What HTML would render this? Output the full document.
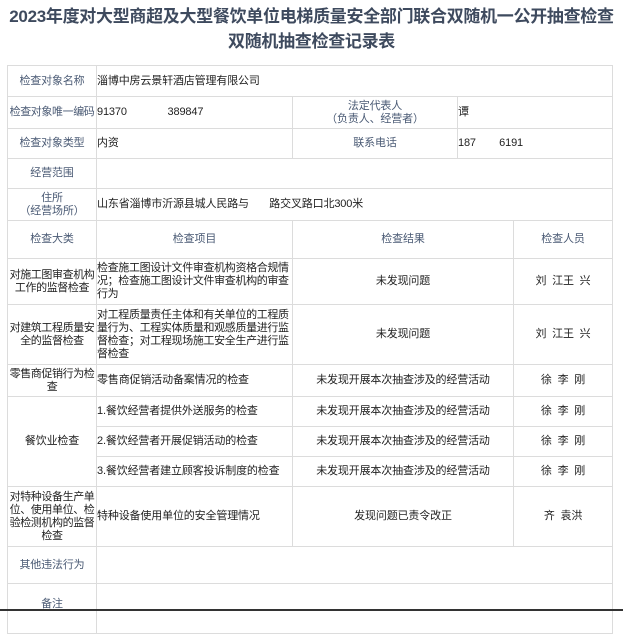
<!DOCTYPE html>
<html><head><meta charset="utf-8"><style>
body{margin:0;width:623px;height:611px;overflow:hidden;background:#fff;font-family:"Liberation Sans","Noto Sans CJK SC",sans-serif;}
h1{margin:0;position:absolute;left:0;width:623px;top:4px;text-align:center;font-size:17px;line-height:25px;color:#3e4a5e;font-weight:bold;letter-spacing:-0.3px}
table{position:absolute;left:7px;top:65px;border-collapse:collapse;table-layout:fixed;width:605px;font-size:11px;color:#222;letter-spacing:-0.15px}
td{border:1px solid #dcdcdc;padding:0;line-height:13px;vertical-align:middle;overflow:hidden}
.h{color:#4a5a74;text-align:center}
.c{text-align:center}
.t{letter-spacing:-0.35px}
</style></head><body>
<h1>2023年度对大型商超及大型餐饮单位电梯质量安全部门联合双随机一公开抽查检查<br>双随机抽查检查记录表</h1>
<table>
<colgroup><col style="width:89px"><col style="width:196px"><col style="width:165px"><col style="width:56px"><col style="width:99px"></colgroup>
<tr style="height:31px"><td class="h">检查对象名称</td><td colspan="4">淄博中房云景轩酒店管理有限公司</td></tr>
<tr style="height:32px"><td class="h" style="white-space:nowrap;letter-spacing:-0.4px">检查对象唯一编码</td><td>91370&nbsp;&nbsp;&nbsp;&nbsp;&nbsp;&nbsp;&nbsp;&nbsp;&nbsp;&nbsp;&nbsp;&nbsp;&nbsp;&nbsp;389847</td><td class="h">法定代表人<br>（负责人、经营者）</td><td colspan="2">谭</td></tr>
<tr style="height:30px"><td class="h">检查对象类型</td><td>内资</td><td class="h">联系电话</td><td colspan="2">187&nbsp;&nbsp;&nbsp;&nbsp;&nbsp;&nbsp;&nbsp;&nbsp;6191</td></tr>
<tr style="height:30px"><td class="h">经营范围</td><td colspan="4"></td></tr>
<tr style="height:32px"><td class="h">住所<br>（经营场所）</td><td colspan="4">山东省淄博市沂源县城人民路与&nbsp;&nbsp;&nbsp;&nbsp;&nbsp;&nbsp;&nbsp;路交叉路口北300米</td></tr>
<tr style="height:38px"><td class="h">检查大类</td><td class="h">检查项目</td><td class="h" colspan="2">检查结果</td><td class="h">检查人员</td></tr>
<tr style="height:46px"><td class="c" style="white-space:nowrap;letter-spacing:-0.4px">对施工图审查机构<br>工作的监督检查</td><td class="t">检查施工图设计文件审查机构资格合规情况；检查施工图设计文件审查机构的审查行为</td><td class="c" colspan="2">未发现问题</td><td class="c">刘&nbsp;&nbsp;江王&nbsp;&nbsp;兴</td></tr>
<tr style="height:60px"><td class="c" style="white-space:nowrap;letter-spacing:-0.4px">对建筑工程质量安<br>全的监督检查</td><td class="t">对工程质量责任主体和有关单位的工程质量行为、工程实体质量和观感质量进行监督检查；对工程现场施工安全生产进行监督检查</td><td class="c" colspan="2">未发现问题</td><td class="c">刘&nbsp;&nbsp;江王&nbsp;&nbsp;兴</td></tr>
<tr style="height:32px"><td class="c" style="white-space:nowrap;letter-spacing:-0.4px">零售商促销行为检<br>查</td><td>零售商促销活动备案情况的检查</td><td class="c" colspan="2">未发现开展本次抽查涉及的经营活动</td><td class="c">徐&nbsp;&nbsp;李&nbsp;&nbsp;刚</td></tr>
<tr style="height:30px"><td class="c" rowspan="3">餐饮业检查</td><td>1.餐饮经营者提供外送服务的检查</td><td class="c" colspan="2">未发现开展本次抽查涉及的经营活动</td><td class="c">徐&nbsp;&nbsp;李&nbsp;&nbsp;刚</td></tr>
<tr style="height:30px"><td>2.餐饮经营者开展促销活动的检查</td><td class="c" colspan="2">未发现开展本次抽查涉及的经营活动</td><td class="c">徐&nbsp;&nbsp;李&nbsp;&nbsp;刚</td></tr>
<tr style="height:30px"><td>3.餐饮经营者建立顾客投诉制度的检查</td><td class="c" colspan="2">未发现开展本次抽查涉及的经营活动</td><td class="c">徐&nbsp;&nbsp;李&nbsp;&nbsp;刚</td></tr>
<tr style="height:60px"><td class="c" style="white-space:nowrap;letter-spacing:-0.4px">对特种设备生产单<br>位、使用单位、检<br>验检测机构的监督<br>检查</td><td>特种设备使用单位的安全管理情况</td><td class="c" colspan="2">发现问题已责令改正</td><td class="c">齐&nbsp;&nbsp;袁洪</td></tr>
<tr style="height:37px"><td class="h">其他违法行为</td><td colspan="4"></td></tr>
<tr style="height:50px"><td class="h" style="vertical-align:top;padding-top:14px">备注</td><td colspan="4"></td></tr>
</table>
<div style="position:absolute;left:0;top:609px;width:623px;height:2px;background:#333"></div>
</body></html>
